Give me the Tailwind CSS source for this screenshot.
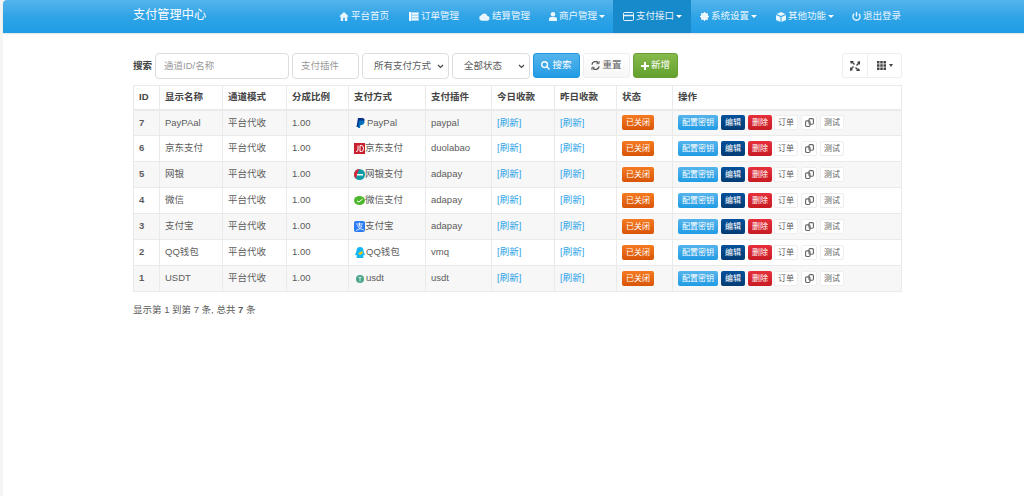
<!DOCTYPE html>
<html lang="zh">
<head>
  <meta charset="UTF-8">
  <title>支付管理中心</title>
  <script src="https://cdn.jsdelivr.net/npm/@tailwindcss/browser@4"></script>
</head>
<body class="bg-white h-[496px] overflow-hidden text-[#5c5c5c] text-[9.5px] font-['Liberation_Sans','Noto_Sans_CJK_SC',sans-serif]">
<div class="h-[496px] border-l-[3px] border-[#f5f5f5]">
  <!-- Navbar -->
  <nav class="h-[33px] bg-gradient-to-b from-[#54b4eb] via-[#2fa4e7] to-[#1d9ce5] rounded-tl-[4px] shadow-[0_1px_2px_rgba(0,0,0,0.12)] flex text-white">
    <div class="w-[130px]"></div>
    <div class="w-[206px] text-[12.200px] leading-[30px]">支付管理中心</div>
    <div class="flex text-[9.500px] text-white/90">
      <a class="w-[70px] flex items-center gap-[2px]"><svg class="w-[10px] h-[9px]" viewBox="0 0 12 11" fill="currentColor"><path d="M6 0 0 5.500h2V11h3V7h2v4h3V5.500h2z"/></svg>平台首页</a>
      <a class="w-[70px] flex items-center gap-[2px]"><svg class="w-[10px] h-[9px]" viewBox="0 0 10 9" fill="currentColor"><path d="M0 0h10v9H0z" opacity=".55"/><path d="M0 0h2v9H0zM3 1h6v1.500H3zM3 3.800h6v1.500H3zM3 6.500h6V8H3z"/></svg>订单管理</a>
      <a class="w-[70px] flex items-center gap-[2px]"><svg class="w-[11px] h-[8px]" viewBox="0 0 12 8" fill="currentColor"><path d="M3 8a3 3 0 0 1-.5-5.900A3.500 3.500 0 0 1 9 2.500 2.800 2.800 0 0 1 9.500 8z"/></svg>结算管理</a>
      <a class="w-[64px] flex items-center gap-[2px]"><svg class="w-[8px] h-[9px]" viewBox="0 0 8 9" fill="currentColor"><circle cx="4" cy="2.300" r="2.300"/><path d="M0 9V6.500Q0 5 2 5h4q2 0 2 1.500V9z"/></svg>商户管理<i class="border-x-[3px] border-x-transparent border-t-[3px] border-t-white"></i></a>
      <a class="w-[78px] pl-[10px] bg-[#178acc] flex items-center gap-[2px]"><svg class="w-[11px] h-[9px]" viewBox="0 0 11 9" fill="none" stroke="currentColor"><rect x=".5" y=".5" width="10" height="8" rx="1"/><path d="M1 3.500h9" stroke-width="1.500"/></svg>支付接口<i class="border-x-[3px] border-x-transparent border-t-[3px] border-t-white"></i></a>
      <a class="w-[76px] pl-[9px] flex items-center gap-[2px]"><svg class="w-[9px] h-[9px]" viewBox="0 0 10 10"><circle cx="5" cy="5" r="3.200" fill="none" stroke="currentColor" stroke-width="2.200"/><path d="M5 0v10M0 5h10M1.500 1.500l7 7M8.500 1.500l-7 7" stroke="currentColor" stroke-width="1.200"/></svg>系统设置<i class="border-x-[3px] border-x-transparent border-t-[3px] border-t-white"></i></a>
      <a class="w-[76px] pl-[9px] flex items-center gap-[2px]"><svg class="w-[10px] h-[10px]" viewBox="0 0 10 10" fill="currentColor"><path d="M5 0 9.500 2 5 4 .5 2zM0 3l4.500 2v5L0 8zM10 3 5.500 5v5L10 8z"/></svg>其他功能<i class="border-x-[3px] border-x-transparent border-t-[3px] border-t-white"></i></a>
      <a class="pl-[9px] flex items-center gap-[2px]"><svg class="w-[9px] h-[9px]" viewBox="0 0 10 10" fill="none" stroke="currentColor" stroke-width="1.500"><path d="M5 0v5M2.500 2a4 4 0 1 0 5 0"/></svg>退出登录</a>
    </div>
  </nav>

  <main class="ml-[130px] w-[769px]">
    <!-- Toolbar -->
    <div class="mt-[20px] h-[26px] flex items-center">
      <b class="w-[22px] font-bold text-[#444]">搜索</b>
      <div class="w-[134px] h-[26px] border border-[#ddd] rounded-[4px] pl-[8px] leading-[24px] text-[#999]">通道ID/名称</div>
      <div class="ml-[3px] w-[67px] h-[26px] border border-[#ddd] rounded-[4px] pl-[8px] leading-[24px] text-[#999]">支付插件</div>
      <div class="ml-[3px] w-[87px] h-[26px] border border-[#ddd] rounded-[4px] pl-[11px] pr-[4px] flex items-center justify-between"><span>所有支付方式</span><svg class="w-[7px] h-[5px]" viewBox="0 0 7 5" fill="none" stroke="#444" stroke-width="1.200"><path d="m1 1 2.500 2.500L6 1"/></svg></div>
      <div class="ml-[3px] w-[78px] h-[26px] border border-[#ddd] rounded-[4px] pl-[11px] pr-[4px] flex items-center justify-between"><span>全部状态</span><svg class="w-[7px] h-[5px]" viewBox="0 0 7 5" fill="none" stroke="#444" stroke-width="1.200"><path d="m1 1 2.500 2.500L6 1"/></svg></div>
      <button class="ml-[3px] mb-[1px] w-[47px] h-[25px] rounded-[3px] bg-gradient-to-b from-[#54b4eb] to-[#1d9ce5] border border-[#1f9ae0] text-white flex items-center justify-center gap-[2px]"><svg class="w-[9px] h-[9px]" viewBox="0 0 10 10" fill="none" stroke="currentColor" stroke-width="1.500"><circle cx="4" cy="4" r="3.200"/><path d="m6.500 6.500 3 3"/></svg>搜索</button>
      <button class="ml-[3px] mb-[1px] w-[47px] h-[25px] rounded-[3px] border border-[#eee] flex items-center justify-center gap-[2px] bg-gradient-to-b from-white to-[#f7f7f7]"><svg class="w-[9px] h-[9px]" viewBox="0 0 10 10" fill="none" stroke="#555" stroke-width="1.500"><path d="M1 4a4 4 0 0 1 7-2M9 6a4 4 0 0 1-7 2"/><path d="M9 0v3H6M1 10V7h3" stroke-width="1"/></svg>重置</button>
      <button class="ml-[3px] mb-[1px] w-[45px] h-[25px] rounded-[3px] bg-gradient-to-b from-[#88ba4c] to-[#62a12c] border border-[#6a9e37] text-white flex items-center justify-center gap-[2px]"><svg class="w-[8px] h-[8px]" viewBox="0 0 8 8" fill="currentColor"><path d="M3 0h2v3h3v2H5v3H3V5H0V3h3z"/></svg>新增</button>
      <div class="ml-auto mb-[1px] flex h-[25px] border border-[#eee] rounded-[3px]">
        <span class="w-[25px] flex items-center justify-center border-r border-[#eee]"><svg class="w-[10px] h-[10px]" viewBox="0 0 10 10" fill="#444"><path d="M0 0h4L3 1l2 2-1 1-2-2-1 1zM10 0v4L9 3 7 5 6 4l2-2-1-1zM0 10V6l1 1 2-2 1 1-2 2 1 1zM10 10H6l1-1-2-2 1-1 2 2 1-1z"/></svg></span>
        <span class="w-[33px] flex items-center justify-center gap-[3px]"><svg class="w-[9px] h-[9px]" viewBox="0 0 9 9" fill="#444"><path d="M0 0h2.500v2.500H0zM3.250 0h2.500v2.500h-2.500zM6.500 0H9v2.500H6.500zM0 3.250h2.500v2.500H0zM3.250 3.250h2.500v2.500h-2.500zM6.500 3.250H9v2.500H6.500zM0 6.500h2.500V9H0zM3.250 6.500h2.500V9h-2.500zM6.500 6.500H9V9H6.500z"/></svg><i class="border-x-[2.500px] border-x-transparent border-t-[3px] border-t-[#444]"></i></span>
      </div>
    </div>

    <!-- Table -->
    <table class="mt-[6px] w-[769px] border-collapse table-fixed">
      <colgroup>
        <col class="w-[26px]"><col class="w-[63px]"><col class="w-[64px]"><col class="w-[62px]"><col class="w-[77px]"><col class="w-[66px]"><col class="w-[63px]"><col class="w-[62px]"><col class="w-[56px]"><col>
      </colgroup>
      <thead>
        <tr class="h-[24px] font-bold text-[#444] [&>th]:border [&>th]:border-b-2 [&>th]:border-[#eaeaea] [&>th]:px-[5px] [&>th]:text-left">
          <th>ID</th><th>显示名称</th><th>通道模式</th><th>分成比例</th><th>支付方式</th><th>支付插件</th><th>今日收款</th><th>昨日收款</th><th>状态</th><th>操作</th>
        </tr>
      </thead>
      <tbody class="[&_td]:border [&_td]:border-[#eaeaea] [&_td]:px-[5px] [&_tr]:h-[26px]">
        <tr class="bg-[#f7f7f7]">
          <td><b>7</b></td><td>PayPAal</td><td>平台代收</td><td>1.00</td>
          <td><span class="flex items-center gap-[2px] pl-[2px]"><svg class="w-[9px] h-[10px]" viewBox="0 0 9 10"><path d="M2 0h4q3 0 2.500 2.500T5 5.500H3.500L3 9H.5z" fill="#003087"/><path d="M3 2.500h4q2 .5 1.500 2T6 7H4.500L4 10H2z" fill="#0070ba"/></svg>PayPal</span></td>
          <td>paypal</td><td class="text-[#2fa4e7]">[刷新]</td><td class="text-[#2fa4e7]">[刷新]</td>
          <td class="pl-[6px]"><span class="inline-block w-[32px] h-[15px] leading-[15px] text-center rounded-[2px] text-[8px] text-white bg-gradient-to-b from-[#f57a1f] to-[#d85505]">已关闭</span></td>
          <td><div class="flex items-center text-[8px] h-[15px] leading-[15px] text-center"><span class="w-[40px] rounded-[2px] text-white bg-gradient-to-b from-[#54b4eb] to-[#1d9ce5]">配置密钥</span><span class="ml-[3px] w-[24px] rounded-[2px] text-white bg-gradient-to-b from-[#04519b] to-[#033c73]">编辑</span><span class="ml-[3px] w-[24px] rounded-[2px] text-white bg-gradient-to-b from-[#e72f3c] to-[#c71c22]">删除</span><span class="ml-[2px] w-[24px] rounded-[2px] border border-[#eee] bg-white leading-[13px]">订单</span><span class="ml-[3px] w-[16px] h-[15px] rounded-[2px] border border-[#eee] bg-white flex items-center justify-center"><svg class="w-[9px] h-[9px]" viewBox="0 0 8 8" fill="none" stroke="#666"><rect x=".5" y="2.500" width="4" height="5" rx="1"/><rect x="3.500" y=".5" width="4" height="5" rx="1"/></svg></span><span class="ml-[3px] w-[24px] rounded-[2px] border border-[#eee] bg-white leading-[13px]">测试</span></div></td>
        </tr>
        <tr>
          <td><b>6</b></td><td>京东支付</td><td>平台代收</td><td>1.00</td>
          <td><span class="flex items-center"><svg class="w-[11px] h-[11px]" viewBox="0 0 11 11"><rect width="11" height="11" fill="#c8202f"/><path d="M4 2.500v4.500q0 1.500-2 1.500M6 2.500v6h1.500q2 0 2-3t-2-3z" fill="none" stroke="#fff"/></svg>京东支付</span></td>
          <td>duolabao</td><td class="text-[#2fa4e7]">[刷新]</td><td class="text-[#2fa4e7]">[刷新]</td>
          <td class="pl-[6px]"><span class="inline-block w-[32px] h-[15px] leading-[15px] text-center rounded-[2px] text-[8px] text-white bg-gradient-to-b from-[#f57a1f] to-[#d85505]">已关闭</span></td>
          <td><div class="flex items-center text-[8px] h-[15px] leading-[15px] text-center"><span class="w-[40px] rounded-[2px] text-white bg-gradient-to-b from-[#54b4eb] to-[#1d9ce5]">配置密钥</span><span class="ml-[3px] w-[24px] rounded-[2px] text-white bg-gradient-to-b from-[#04519b] to-[#033c73]">编辑</span><span class="ml-[3px] w-[24px] rounded-[2px] text-white bg-gradient-to-b from-[#e72f3c] to-[#c71c22]">删除</span><span class="ml-[2px] w-[24px] rounded-[2px] border border-[#eee] bg-white leading-[13px]">订单</span><span class="ml-[3px] w-[16px] h-[15px] rounded-[2px] border border-[#eee] bg-white flex items-center justify-center"><svg class="w-[9px] h-[9px]" viewBox="0 0 8 8" fill="none" stroke="#666"><rect x=".5" y="2.500" width="4" height="5" rx="1"/><rect x="3.500" y=".5" width="4" height="5" rx="1"/></svg></span><span class="ml-[3px] w-[24px] rounded-[2px] border border-[#eee] bg-white leading-[13px]">测试</span></div></td>
        </tr>
        <tr class="bg-[#f7f7f7]">
          <td><b>5</b></td><td>网银</td><td>平台代收</td><td>1.00</td>
          <td><span class="flex items-center"><svg class="w-[11px] h-[11px]" viewBox="0 0 11 11"><circle cx="5.500" cy="5.500" r="5.500" fill="#0e9aa7"/><path d="M5.500 0A5.500 5.500 0 0 0 2 9.700C3 7 3 3 5.500 0z" fill="#d9263c"/><path d="M3 5h6v1.500H3z" fill="#fff"/></svg>网银支付</span></td>
          <td>adapay</td><td class="text-[#2fa4e7]">[刷新]</td><td class="text-[#2fa4e7]">[刷新]</td>
          <td class="pl-[6px]"><span class="inline-block w-[32px] h-[15px] leading-[15px] text-center rounded-[2px] text-[8px] text-white bg-gradient-to-b from-[#f57a1f] to-[#d85505]">已关闭</span></td>
          <td><div class="flex items-center text-[8px] h-[15px] leading-[15px] text-center"><span class="w-[40px] rounded-[2px] text-white bg-gradient-to-b from-[#54b4eb] to-[#1d9ce5]">配置密钥</span><span class="ml-[3px] w-[24px] rounded-[2px] text-white bg-gradient-to-b from-[#04519b] to-[#033c73]">编辑</span><span class="ml-[3px] w-[24px] rounded-[2px] text-white bg-gradient-to-b from-[#e72f3c] to-[#c71c22]">删除</span><span class="ml-[2px] w-[24px] rounded-[2px] border border-[#eee] bg-white leading-[13px]">订单</span><span class="ml-[3px] w-[16px] h-[15px] rounded-[2px] border border-[#eee] bg-white flex items-center justify-center"><svg class="w-[9px] h-[9px]" viewBox="0 0 8 8" fill="none" stroke="#666"><rect x=".5" y="2.500" width="4" height="5" rx="1"/><rect x="3.500" y=".5" width="4" height="5" rx="1"/></svg></span><span class="ml-[3px] w-[24px] rounded-[2px] border border-[#eee] bg-white leading-[13px]">测试</span></div></td>
        </tr>
        <tr>
          <td><b>4</b></td><td>微信</td><td>平台代收</td><td>1.00</td>
          <td><span class="flex items-center"><svg class="w-[11px] h-[9px]" viewBox="0 0 11 9"><ellipse cx="5.500" cy="4.500" rx="5.500" ry="4.500" fill="#4fb82f"/><path d="m3 5 2 1L8.500 3" fill="none" stroke="#fff"/></svg>微信支付</span></td>
          <td>adapay</td><td class="text-[#2fa4e7]">[刷新]</td><td class="text-[#2fa4e7]">[刷新]</td>
          <td class="pl-[6px]"><span class="inline-block w-[32px] h-[15px] leading-[15px] text-center rounded-[2px] text-[8px] text-white bg-gradient-to-b from-[#f57a1f] to-[#d85505]">已关闭</span></td>
          <td><div class="flex items-center text-[8px] h-[15px] leading-[15px] text-center"><span class="w-[40px] rounded-[2px] text-white bg-gradient-to-b from-[#54b4eb] to-[#1d9ce5]">配置密钥</span><span class="ml-[3px] w-[24px] rounded-[2px] text-white bg-gradient-to-b from-[#04519b] to-[#033c73]">编辑</span><span class="ml-[3px] w-[24px] rounded-[2px] text-white bg-gradient-to-b from-[#e72f3c] to-[#c71c22]">删除</span><span class="ml-[2px] w-[24px] rounded-[2px] border border-[#eee] bg-white leading-[13px]">订单</span><span class="ml-[3px] w-[16px] h-[15px] rounded-[2px] border border-[#eee] bg-white flex items-center justify-center"><svg class="w-[9px] h-[9px]" viewBox="0 0 8 8" fill="none" stroke="#666"><rect x=".5" y="2.500" width="4" height="5" rx="1"/><rect x="3.500" y=".5" width="4" height="5" rx="1"/></svg></span><span class="ml-[3px] w-[24px] rounded-[2px] border border-[#eee] bg-white leading-[13px]">测试</span></div></td>
        </tr>
        <tr class="bg-[#f7f7f7]">
          <td><b>3</b></td><td>支付宝</td><td>平台代收</td><td>1.00</td>
          <td><span class="flex items-center"><svg class="w-[11px] h-[11px]" viewBox="0 0 11 11"><rect width="11" height="11" rx="2" fill="#2b7bf5"/><path d="M2 3h7M5.500 1.500V5M3 5h5Q7 8 2 9.500M4 6q2 2 6 3" fill="none" stroke="#fff" stroke-width=".8"/></svg>支付宝</span></td>
          <td>adapay</td><td class="text-[#2fa4e7]">[刷新]</td><td class="text-[#2fa4e7]">[刷新]</td>
          <td class="pl-[6px]"><span class="inline-block w-[32px] h-[15px] leading-[15px] text-center rounded-[2px] text-[8px] text-white bg-gradient-to-b from-[#f57a1f] to-[#d85505]">已关闭</span></td>
          <td><div class="flex items-center text-[8px] h-[15px] leading-[15px] text-center"><span class="w-[40px] rounded-[2px] text-white bg-gradient-to-b from-[#54b4eb] to-[#1d9ce5]">配置密钥</span><span class="ml-[3px] w-[24px] rounded-[2px] text-white bg-gradient-to-b from-[#04519b] to-[#033c73]">编辑</span><span class="ml-[3px] w-[24px] rounded-[2px] text-white bg-gradient-to-b from-[#e72f3c] to-[#c71c22]">删除</span><span class="ml-[2px] w-[24px] rounded-[2px] border border-[#eee] bg-white leading-[13px]">订单</span><span class="ml-[3px] w-[16px] h-[15px] rounded-[2px] border border-[#eee] bg-white flex items-center justify-center"><svg class="w-[9px] h-[9px]" viewBox="0 0 8 8" fill="none" stroke="#666"><rect x=".5" y="2.500" width="4" height="5" rx="1"/><rect x="3.500" y=".5" width="4" height="5" rx="1"/></svg></span><span class="ml-[3px] w-[24px] rounded-[2px] border border-[#eee] bg-white leading-[13px]">测试</span></div></td>
        </tr>
        <tr>
          <td><b>2</b></td><td>QQ钱包</td><td>平台代收</td><td>1.00</td>
          <td><span class="flex items-center gap-[1px] pl-[1px]"><svg class="w-[10px] h-[11px]" viewBox="0 0 10 11"><path d="M5 0q3.500 0 3.500 4L10 8 8 8.500 8.500 11h-7L2 8.500 0 8l1.500-4Q1.500 0 5 0z" fill="#12b7f5"/><path d="M3 6.500 7 4l1 2-3 2z" fill="#f5c518"/></svg>QQ钱包</span></td>
          <td>vmq</td><td class="text-[#2fa4e7]">[刷新]</td><td class="text-[#2fa4e7]">[刷新]</td>
          <td class="pl-[6px]"><span class="inline-block w-[32px] h-[15px] leading-[15px] text-center rounded-[2px] text-[8px] text-white bg-gradient-to-b from-[#f57a1f] to-[#d85505]">已关闭</span></td>
          <td><div class="flex items-center text-[8px] h-[15px] leading-[15px] text-center"><span class="w-[40px] rounded-[2px] text-white bg-gradient-to-b from-[#54b4eb] to-[#1d9ce5]">配置密钥</span><span class="ml-[3px] w-[24px] rounded-[2px] text-white bg-gradient-to-b from-[#04519b] to-[#033c73]">编辑</span><span class="ml-[3px] w-[24px] rounded-[2px] text-white bg-gradient-to-b from-[#e72f3c] to-[#c71c22]">删除</span><span class="ml-[2px] w-[24px] rounded-[2px] border border-[#eee] bg-white leading-[13px]">订单</span><span class="ml-[3px] w-[16px] h-[15px] rounded-[2px] border border-[#eee] bg-white flex items-center justify-center"><svg class="w-[9px] h-[9px]" viewBox="0 0 8 8" fill="none" stroke="#666"><rect x=".5" y="2.500" width="4" height="5" rx="1"/><rect x="3.500" y=".5" width="4" height="5" rx="1"/></svg></span><span class="ml-[3px] w-[24px] rounded-[2px] border border-[#eee] bg-white leading-[13px]">测试</span></div></td>
        </tr>
        <tr class="bg-[#f7f7f7]">
          <td><b>1</b></td><td>USDT</td><td>平台代收</td><td>1.00</td>
          <td><span class="flex items-center gap-[2px] pl-[2px]"><svg class="w-[8px] h-[8px]" viewBox="0 0 8 8"><circle cx="4" cy="4" r="4" fill="#4ba58c"/><path d="M2.500 2.500h3M4 2.500v4" stroke="#cfe8e0"/></svg>usdt</span></td>
          <td>usdt</td><td class="text-[#2fa4e7]">[刷新]</td><td class="text-[#2fa4e7]">[刷新]</td>
          <td class="pl-[6px]"><span class="inline-block w-[32px] h-[15px] leading-[15px] text-center rounded-[2px] text-[8px] text-white bg-gradient-to-b from-[#f57a1f] to-[#d85505]">已关闭</span></td>
          <td><div class="flex items-center text-[8px] h-[15px] leading-[15px] text-center"><span class="w-[40px] rounded-[2px] text-white bg-gradient-to-b from-[#54b4eb] to-[#1d9ce5]">配置密钥</span><span class="ml-[3px] w-[24px] rounded-[2px] text-white bg-gradient-to-b from-[#04519b] to-[#033c73]">编辑</span><span class="ml-[3px] w-[24px] rounded-[2px] text-white bg-gradient-to-b from-[#e72f3c] to-[#c71c22]">删除</span><span class="ml-[2px] w-[24px] rounded-[2px] border border-[#eee] bg-white leading-[13px]">订单</span><span class="ml-[3px] w-[16px] h-[15px] rounded-[2px] border border-[#eee] bg-white flex items-center justify-center"><svg class="w-[9px] h-[9px]" viewBox="0 0 8 8" fill="none" stroke="#666"><rect x=".5" y="2.500" width="4" height="5" rx="1"/><rect x="3.500" y=".5" width="4" height="5" rx="1"/></svg></span><span class="ml-[3px] w-[24px] rounded-[2px] border border-[#eee] bg-white leading-[13px]">测试</span></div></td>
        </tr>
      </tbody>
    </table>
    <p class="mt-[11px]">显示第 1 到第 7 条, 总共 <b>7</b> 条</p>
  </main>
</div>
</body>
</html>
